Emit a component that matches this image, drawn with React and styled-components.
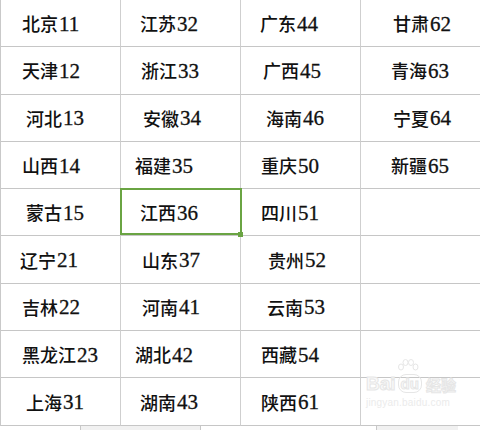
import styled, { createGlobalStyle } from "styled-components";

const GlobalStyle = createGlobalStyle`
  html, body {
    margin: 0;
    padding: 0;
    background: #ffffff;
    overflow: hidden;
  }
`;

// [name, code, left padding, selected]
const rows = [
  [["北京", "11", 21], ["江苏", "32", 19], ["广东", "44", 19], ["甘肃", "62", 32]],
  [["天津", "12", 21], ["浙江", "33", 20], ["广西", "45", 22], ["青海", "63", 30]],
  [["河北", "13", 25], ["安徽", "34", 22], ["海南", "46", 25], ["宁夏", "64", 32]],
  [["山西", "14", 21], ["福建", "35", 14], ["重庆", "50", 20], ["新疆", "65", 30]],
  [["蒙古", "15", 25], ["江西", "36", 19, true], ["四川", "51", 20], ["", "", 0]],
  [["辽宁", "21", 19], ["山东", "37", 21], ["贵州", "52", 27], ["", "", 0]],
  [["吉林", "22", 21], ["河南", "41", 21], ["云南", "53", 26], ["", "", 0]],
  [["黑龙江", "23", 21], ["湖北", "42", 14], ["西藏", "54", 20], ["", "", 0]],
  [["上海", "31", 25], ["湖南", "43", 19], ["陕西", "61", 20], ["", "", 0]],
];

const Page = styled.div`
  position: relative;
  width: 480px;
  height: 430px;
  overflow: hidden;
  background: #fff;
`;

const Sheet = styled.div`
  display: grid;
  grid-template-columns: repeat(4, 120px);
  grid-auto-rows: 47.3px;
  border-left: 1px solid #c9c9c9;
  width: 481px;
`;

const Cell = styled.div`
  position: relative;
  display: flex;
  align-items: center;
  padding-left: ${(p) => p.$pad}px;
  border-right: 1px solid #cfcfcf;
  border-bottom: 1px solid #c6c6c6;
  font-family: "Noto Sans CJK SC", sans-serif;
  font-size: 18px;
  font-weight: 500;
  color: #111;
  white-space: nowrap;
  box-sizing: border-box;

  ${(p) =>
    p.$selected &&
    `
    &::after {
      content: "";
      position: absolute;
      top: -1px;
      left: -1.5px;
      right: -1.5px;
      bottom: 0;
      border: 2px solid #6aa443;
      pointer-events: none;
    }
  `}
`;

const Num = styled.span`
  position: relative;
  top: 1px;
  font-family: "Liberation Serif", serif;
  font-size: 21px;
  line-height: 1;
  margin-left: 1px;
  -webkit-text-stroke: 0.3px #111;
`;

const Handle = styled.span`
  position: absolute;
  right: -3px;
  bottom: -2px;
  width: 5px;
  height: 5px;
  background: #6aa443;
  z-index: 2;
`;

const Strip = styled.div`
  display: grid;
  grid-template-columns: 80px 120px 176px 82px;
  height: 6px;
`;

const StripPart = styled.div`
  background: ${(p) => (p.$shade ? "#f1f1f1" : "transparent")};
  border-left: ${(p) => (p.$line ? "1px solid #c8c8c8" : "none")};
`;

const Watermark = styled.div`
  position: absolute;
  left: 366px;
  top: 374px;
  display: flex;
  flex-direction: column;
  font-family: "Liberation Sans", "Noto Sans CJK SC", sans-serif;
  pointer-events: none;
`;

const MarkRow = styled.div`
  display: flex;
  align-items: flex-end;
  gap: 2px;
  font-size: 19px;
  font-weight: bold;
  line-height: 1;
  -webkit-text-stroke: 1px #e6e6e6;
  color: #fafafa;
`;

const Du = styled.span`
  position: relative;
  font-size: 15px;
  padding: 1px 2px;
  border-radius: 8px;
  border: 1px solid #e6e6e6;
`;

const Paw = styled.svg`
  position: absolute;
  left: -2px;
  top: -16px;
`;

const Jing = styled.span`
  font-size: 15px;
  margin-left: 2px;
`;

const Url = styled.div`
  margin-top: 4px;
  font-size: 10px;
  color: #ebebeb;
  letter-spacing: 0.2px;
`;

export default function App() {
  return (
    <>
      <GlobalStyle />
      <Page>
        <Sheet>
          {rows.map((row, r) =>
            row.map(([name, code, pad, selected], c) => (
              <Cell key={`${r}-${c}`} $pad={pad} $selected={selected}>
                {name}
                {code && <Num>{code}</Num>}
                {selected && <Handle />}
              </Cell>
            ))
          )}
        </Sheet>
        <Strip>
          <StripPart />
          <StripPart $shade $line />
          <StripPart $line />
          <StripPart $shade $line />
        </Strip>
        <Watermark>
          <MarkRow>
            Bai
            <Du>
              <Paw width="22" height="16" viewBox="0 0 22 16">
                <g fill="none" stroke="#e6e6e6" strokeWidth="1">
                  <ellipse cx="4" cy="8" rx="2.5" ry="3" />
                  <ellipse cx="8.5" cy="3.5" rx="2.5" ry="3" />
                  <ellipse cx="14" cy="3.5" rx="2.5" ry="3" />
                  <ellipse cx="18.5" cy="8" rx="2.5" ry="3" />
                </g>
              </Paw>
              du
            </Du>
            <Jing>经验</Jing>
          </MarkRow>
          <Url>jingyan.baidu.com</Url>
        </Watermark>
      </Page>
    </>
  );
}
